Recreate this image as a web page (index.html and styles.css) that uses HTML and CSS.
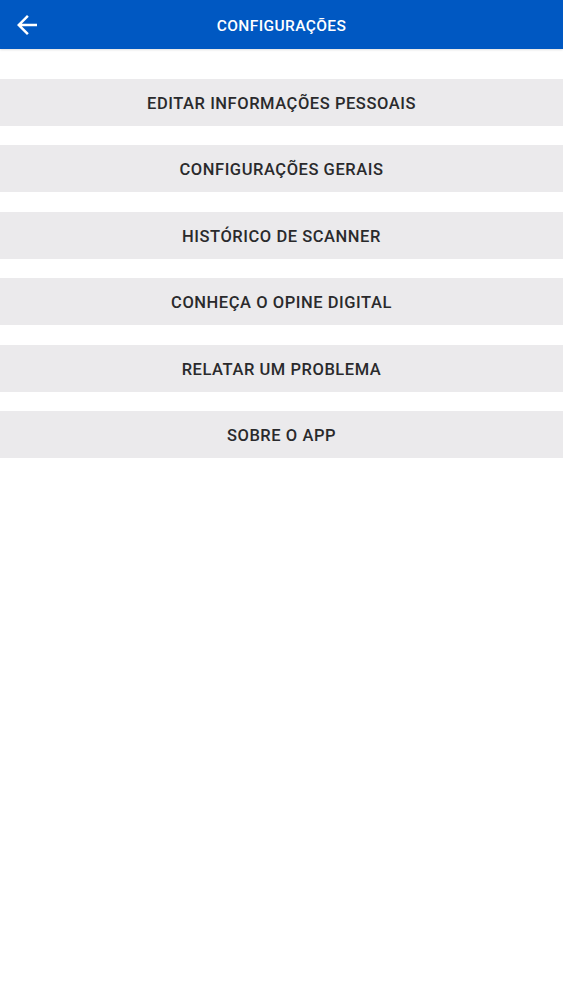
FILE: index.html
```html
<!DOCTYPE html>
<html lang="pt">
  <head>
    <meta charset="UTF-8" />
    <meta name="viewport" content="width=device-width, initial-scale=1.0" />
    <title>Configurações</title>
    <link rel="stylesheet" href="styles.css">
  </head>
  <body>
    <div class="app-bar">
      <svg class="back-icon" width="30" height="30" viewBox="0 0 24 24">
        <path d="M20 11H7.83l5.59-5.59L12 4l-8 8 8 8 1.41-1.41L7.83 13H20v-2z" fill="#fff" />
      </svg>
      <h1>CONFIGURAÇÕES</h1>
    </div>

    <div class="menu">
      <div class="menu-item">EDITAR INFORMAÇÕES PESSOAIS</div>
      <div class="menu-item">CONFIGURAÇÕES GERAIS</div>
      <div class="menu-item">HISTÓRICO DE SCANNER</div>
      <div class="menu-item">CONHEÇA O OPINE DIGITAL</div>
      <div class="menu-item">RELATAR UM PROBLEMA</div>
      <div class="menu-item">SOBRE O APP</div>
    </div>
  </body>
</html>
```

FILE: styles.css
```css
body {
  font-family: Roboto, "Liberation Sans", sans-serif;
  background-color: #fff;
  margin: 0;
}

.app-bar {
  position: relative;
  height: 49px;
  display: flex;
  align-items: center;
  justify-content: center;
  background-color: #0058c2;
  box-shadow: 0 1px 2px rgba(0, 0, 0, 0.12);
}

.back-icon {
  position: absolute;
  left: 12px;
  top: 10px;
}

h1 {
  margin: 0;
  padding-top: 2px;
  color: #fff;
  font-size: 15.5px;
  font-weight: 500;
  letter-spacing: 0.4px;
}

.menu {
  display: flex;
  flex-direction: column;
  gap: 19.4px;
  padding-top: 30px;
}

.menu-item {
  height: 47px;
  box-sizing: border-box;
  padding-top: 2px;
  display: flex;
  align-items: center;
  justify-content: center;
  background-color: #ebeaec;
  color: #2a2a2c;
  font-size: 16.5px;
  font-weight: 500;
  letter-spacing: 0.55px;
}
```
